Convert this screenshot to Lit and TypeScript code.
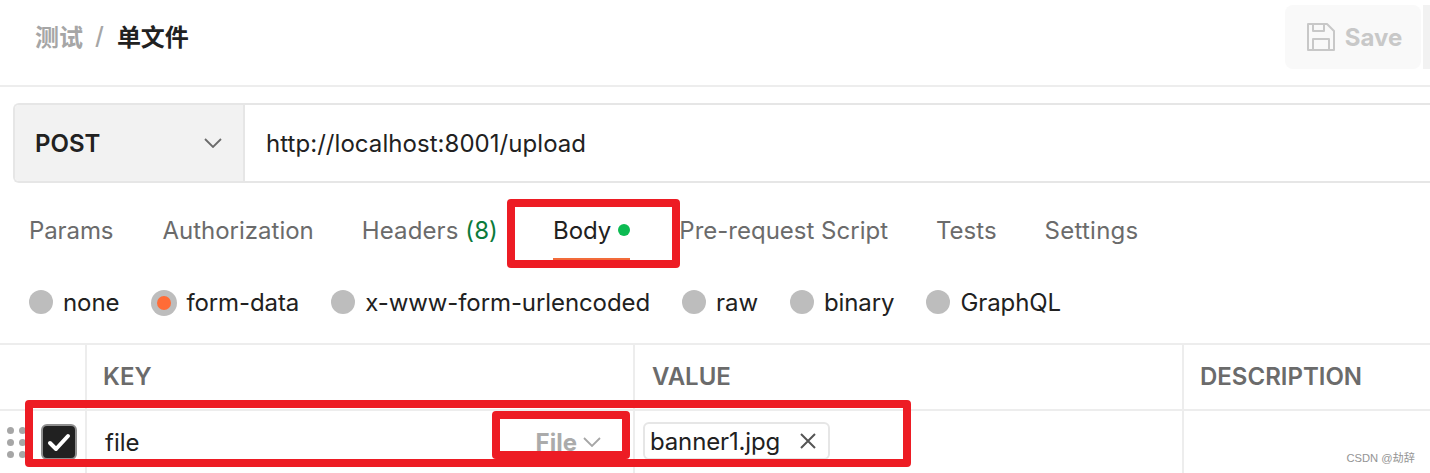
import { LitElement, html, css } from "lit";
import { customElement } from "lit/decorators.js";

const chevron = (w: number, h: number) => html`<svg width=${w} height=${h} viewBox="0 0 18 10" fill="none" stroke="currentColor" stroke-width="1.8"><path d="M1 1l8 8 8-8"/></svg>`;

@customElement("app-root")
export class AppRoot extends LitElement {
  static styles = css`
    :host { display: block; position: relative; width: 1430px; height: 473px; overflow: hidden; background: #fff; font-family: Inter, "Noto Sans CJK SC", sans-serif; font-size: 24px; color: #212121; }
    .header { height: 85px; box-sizing: border-box; display: flex; align-items: flex-start; }
    .crumbs { display: flex; align-items: center; height: 70px; padding-left: 35px; font-weight: 700; flex: 1; }
    .crumbs .muted { color: #a6a6a6; }
    .crumbs .sep { color: #a6a6a6; margin: 0 13px 0 12px; font-weight: 500; }
    .save { margin-top: 5px; width: 136px; height: 64px; box-sizing: border-box; background: #f9f9f9; border-radius: 8px; display: flex; align-items: center; justify-content: center; gap: 10px; color: #c8c8c8; font-weight: 700; font-size: 24px; padding-left: 3px; }
    .save-more { margin: 5px 0 0 2px; width: 7px; height: 64px; background: #f2f2f2; }
    .rule { height: 2px; background: #ededed; }
    .urlbar { margin: 16px 0 0 13px; height: 80px; box-sizing: border-box; border: 2px solid #e6e6e6; border-right: 0; border-radius: 6px 0 0 6px; display: flex; }
    .method { width: 230px; box-sizing: border-box; background: #f2f2f2; border-right: 2px solid #e6e6e6; border-radius: 4px 0 0 4px; display: flex; align-items: center; justify-content: space-between; padding: 0 21px 0 20px; font-weight: 600; }
    .method svg { color: #6b6b6b; }
    .url { display: flex; align-items: center; padding-left: 21px; letter-spacing: 0.05px; }
    .tabs { display: flex; height: 96px; align-items: center; padding-left: 29px; color: #6b6b6b; transform: translateY(-1px); }
    .tab { white-space: nowrap; margin-right: 48px; }
    .tab.p { margin-right: 49px; letter-spacing: -0.1px; }
    .tab .count { color: #0b7a3b; }
    .tab.h { margin-right: 55px; letter-spacing: 0.1px; }
    .tab.active { color: #212121; position: relative; display: flex; align-items: center; gap: 7px; margin-right: 49px; }
    .tab.s { letter-spacing: 0.25px; margin-right: 0; }
    .dot { width: 12px; height: 12px; border-radius: 50%; background: #0cbb52; }
    .underline { position: absolute; left: 0; right: 0; bottom: -15px; height: 2px; background: #f26b3a; }
    .radios { display: flex; align-items: center; height: 46px; padding-left: 29px; letter-spacing: -0.09px; }
    .radio { display: flex; align-items: center; gap: 10px; margin-right: 32px; white-space: nowrap; }
    .circle { width: 24px; height: 24px; border-radius: 50%; background: #bdbdbd; display: flex; align-items: center; justify-content: center; }
    .circle.on { width: 26px; height: 26px; margin: 2px -1px 0 0; }
    .circle.on::after { content: ""; width: 14px; height: 14px; border-radius: 50%; background: #ff6c37; }
    .table { margin-top: 18px; border-top: 2px solid #ededed; }
    .row { display: grid; grid-template-columns: 85px 548px 549px 1fr; }
    .row.head { height: 64px; box-sizing: content-box; border-bottom: 2px solid #ededed; font-weight: 600; color: #6b6b6b; }
    .row.head .cell { padding-bottom: 2px; box-sizing: border-box; }
    .row.head .value { padding-left: 17px; }
    .row.body { height: 62px; }
    .cell { border-left: 2px solid #ededed; display: flex; align-items: center; padding-left: 16px; }
    .cell:first-child { border-left: 0; padding-left: 0; }
    .grip { display: grid; grid-template-columns: repeat(2, 7px); gap: 5px; margin-left: 7px; margin-right: 15px; }
    .grip i { width: 7px; height: 7px; border-radius: 50%; background: #a6a6a6; }
    .check { width: 36px; height: 36px; box-sizing: border-box; background: #212121; border: 2px solid #8f8f8f; border-radius: 6px; display: flex; align-items: center; justify-content: center; }
    .key { justify-content: space-between; padding-left: 18px; padding-right: 32px; }
    .file { display: flex; align-items: center; gap: 6px; color: #ababab; font-weight: 700; }
    .file svg { color: #a6a6a6; }
    .val { padding-left: 8px; }
    .chip { height: 38px; box-sizing: border-box; border: 2px solid #e6e6e6; border-radius: 6px; padding: 0 12px 0 5px; display: flex; align-items: center; gap: 20px; margin-top: -2px; letter-spacing: -0.15px; }
    .chip svg { color: #555; }
    .mark { position: absolute; box-sizing: border-box; border: 8px solid #ed1c24; border-radius: 4px; pointer-events: none; }
    .mark.a { left: 507px; top: 199px; width: 173px; height: 69px; }
    .mark.b { left: 25px; top: 400px; width: 886px; height: 67px; }
    .mark.c { left: 492px; top: 411px; width: 138px; height: 48px; }
    .wm { position: absolute; right: 15px; top: 449px; font-size: 11.2px; color: #949494; font-family: "Liberation Sans", "Noto Sans CJK SC", sans-serif; }
  `;

  render() {
    return html`
      <div class="header">
        <div class="crumbs"><span class="muted">测试</span><span class="sep">/</span><span>单文件</span></div>
        <div class="save">
          <svg width="28" height="28" viewBox="0 0 28 28" fill="none" stroke="currentColor" stroke-width="2" stroke-linejoin="round">
            <path d="M1 1h19l7 7v19H1z"/><path d="M6 1v7h11V1"/><path d="M6 27V16h16v11"/>
          </svg>
          <span>Save</span>
        </div>
        <div class="save-more"></div>
      </div>
      <div class="rule"></div>
      <div class="urlbar">
        <div class="method"><span>POST</span>${chevron(18, 10)}</div>
        <div class="url">http://localhost:8001/upload</div>
      </div>
      <div class="tabs">
        <span class="tab p">Params</span>
        <span class="tab">Authorization</span>
        <span class="tab h">Headers <span class="count">(8)</span></span>
        <span class="tab active"><span>Body</span><span class="dot"></span><span class="underline"></span></span>
        <span class="tab">Pre-request Script</span>
        <span class="tab">Tests</span>
        <span class="tab s">Settings</span>
      </div>
      <div class="radios">
        ${["none", "form-data", "x-www-form-urlencoded", "raw", "binary", "GraphQL"].map(
          (t) => html`<span class="radio"><span class="circle ${t === "form-data" ? "on" : ""}"></span>${t}</span>`
        )}
      </div>
      <div class="table">
        <div class="row head">
          <div class="cell"></div>
          <div class="cell">KEY</div>
          <div class="cell value">VALUE</div>
          <div class="cell">DESCRIPTION</div>
        </div>
        <div class="row body">
          <div class="cell">
            <div class="grip">${Array.from({ length: 6 }, () => html`<i></i>`)}</div>
            <div class="check">
              <svg width="24" height="20" viewBox="0 0 24 20" fill="none" stroke="#fff" stroke-width="4" stroke-linecap="round" stroke-linejoin="round"><path d="M3 11l6 6L21 4"/></svg>
            </div>
          </div>
          <div class="cell key"><span>file</span><span class="file">File ${chevron(18, 10)}</span></div>
          <div class="cell val">
            <div class="chip"><span>banner1.jpg</span>
              <svg width="16" height="16" viewBox="0 0 16 16" fill="none" stroke="currentColor" stroke-width="2"><path d="M1 1l14 14M15 1L1 15"/></svg>
            </div>
          </div>
          <div class="cell"></div>
        </div>
      </div>
      <div class="mark a"></div>
      <div class="mark b"></div>
      <div class="mark c"></div>
      <div class="wm">CSDN @劫辞</div>
    `;
  }
}
